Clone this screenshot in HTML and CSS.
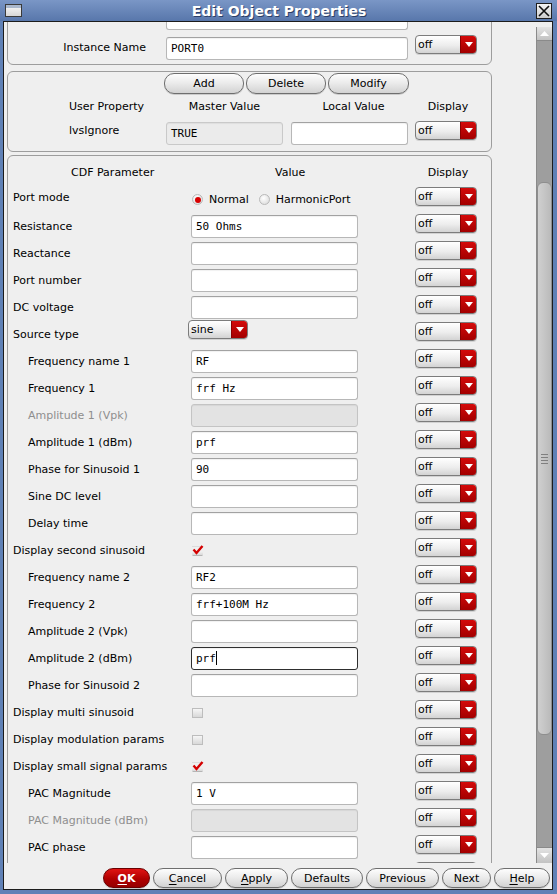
FILE: index.html
```html
<!DOCTYPE html>
<html>
<head>
<meta charset="utf-8">
<title>Edit Object Properties</title>
<link rel="stylesheet" href="styles.css">
</head>
<body>
<div class="window">
  <div class="titlebar">
    <span class="win-icon"></span>
    <span class="title">Edit Object Properties</span>
    <span class="close-btn"><svg width="12" height="12" viewBox="0 0 12 12"><path d="M1 1L11 11M11 1L1 11" stroke="#111" stroke-width="1.6" fill="none"/></svg></span>
  </div>
  <div class="frame">
    <div class="main">
      <div class="viewport">
        <div class="scroll-content">

          <section class="group g1">
            <div class="g1-row">
              <span class="g1-label"></span>
              <span class="field g1-field"></span>
            </div>
            <div class="g1-row">
              <span class="g1-label">Instance Name</span>
              <span class="field g1-field">PORT0</span>
              <span class="dd dd-g1"><span class="dd-text">off</span><span class="dd-btn"><svg width="8" height="5" viewBox="0 0 8 5"><path d="M0 0H8L4 5Z" fill="#fff"/></svg></span></span>
            </div>
          </section>

          <section class="group g2">
            <div class="g2-buttons">
              <span class="pill w80">Add</span>
              <span class="pill w80">Delete</span>
              <span class="pill w81">Modify</span>
            </div>
            <div class="g2-grid g2-head">
              <span class="h-user">User Property</span>
              <span class="h-center">Master Value</span>
              <span class="h-center h-local">Local Value</span>
              <span class="h-center h-disp">Display</span>
            </div>
            <div class="g2-grid g2-data">
              <span class="g2-label">lvsIgnore</span>
              <span class="field field-ro g2-box">TRUE</span>
              <span class="field g2-box"></span>
              <span class="dd dd-g2"><span class="dd-text">off</span><span class="dd-btn"><svg width="8" height="5" viewBox="0 0 8 5"><path d="M0 0H8L4 5Z" fill="#fff"/></svg></span></span>
            </div>
          </section>

          <section class="group g3">
            <div class="g3-head">
              <span class="h-cdf">CDF Parameter</span>
              <span class="h-value">Value</span>
              <span class="h-center h-disp">Display</span>
            </div>

            <div class="row">
              <span class="lbl lbl-up">Port mode</span>
              <span class="radios">
                <span class="radio on"></span><span class="radio-text">Normal</span>
                <span class="radio"></span><span class="radio-text">HarmonicPort</span>
              </span>
              <span class="dd"><span class="dd-text">off</span><span class="dd-btn"><svg width="8" height="5" viewBox="0 0 8 5"><path d="M0 0H8L4 5Z" fill="#fff"/></svg></span></span>
            </div>
            <div class="row">
              <span class="lbl">Resistance</span>
              <span class="field g3-field">50 Ohms</span>
              <span class="dd"><span class="dd-text">off</span><span class="dd-btn"><svg width="8" height="5" viewBox="0 0 8 5"><path d="M0 0H8L4 5Z" fill="#fff"/></svg></span></span>
            </div>
            <div class="row">
              <span class="lbl">Reactance</span>
              <span class="field g3-field"></span>
              <span class="dd"><span class="dd-text">off</span><span class="dd-btn"><svg width="8" height="5" viewBox="0 0 8 5"><path d="M0 0H8L4 5Z" fill="#fff"/></svg></span></span>
            </div>
            <div class="row">
              <span class="lbl">Port number</span>
              <span class="field g3-field"></span>
              <span class="dd"><span class="dd-text">off</span><span class="dd-btn"><svg width="8" height="5" viewBox="0 0 8 5"><path d="M0 0H8L4 5Z" fill="#fff"/></svg></span></span>
            </div>
            <div class="row">
              <span class="lbl">DC voltage</span>
              <span class="field g3-field"></span>
              <span class="dd"><span class="dd-text">off</span><span class="dd-btn"><svg width="8" height="5" viewBox="0 0 8 5"><path d="M0 0H8L4 5Z" fill="#fff"/></svg></span></span>
            </div>
            <div class="row">
              <span class="lbl">Source type</span>
              <span class="dd dd-sel"><span class="dd-text">sine</span><span class="dd-btn"><svg width="8" height="5" viewBox="0 0 8 5"><path d="M0 0H8L4 5Z" fill="#fff"/></svg></span></span>
              <span class="dd"><span class="dd-text">off</span><span class="dd-btn"><svg width="8" height="5" viewBox="0 0 8 5"><path d="M0 0H8L4 5Z" fill="#fff"/></svg></span></span>
            </div>
            <div class="row">
              <span class="lbl ind">Frequency name 1</span>
              <span class="field g3-field">RF</span>
              <span class="dd"><span class="dd-text">off</span><span class="dd-btn"><svg width="8" height="5" viewBox="0 0 8 5"><path d="M0 0H8L4 5Z" fill="#fff"/></svg></span></span>
            </div>
            <div class="row">
              <span class="lbl ind">Frequency 1</span>
              <span class="field g3-field">frf Hz</span>
              <span class="dd"><span class="dd-text">off</span><span class="dd-btn"><svg width="8" height="5" viewBox="0 0 8 5"><path d="M0 0H8L4 5Z" fill="#fff"/></svg></span></span>
            </div>
            <div class="row">
              <span class="lbl ind dis">Amplitude 1 (Vpk)</span>
              <span class="field g3-field field-dis"></span>
              <span class="dd"><span class="dd-text">off</span><span class="dd-btn"><svg width="8" height="5" viewBox="0 0 8 5"><path d="M0 0H8L4 5Z" fill="#fff"/></svg></span></span>
            </div>
            <div class="row">
              <span class="lbl ind">Amplitude 1 (dBm)</span>
              <span class="field g3-field">prf</span>
              <span class="dd"><span class="dd-text">off</span><span class="dd-btn"><svg width="8" height="5" viewBox="0 0 8 5"><path d="M0 0H8L4 5Z" fill="#fff"/></svg></span></span>
            </div>
            <div class="row">
              <span class="lbl ind">Phase for Sinusoid 1</span>
              <span class="field g3-field">90</span>
              <span class="dd"><span class="dd-text">off</span><span class="dd-btn"><svg width="8" height="5" viewBox="0 0 8 5"><path d="M0 0H8L4 5Z" fill="#fff"/></svg></span></span>
            </div>
            <div class="row">
              <span class="lbl ind">Sine DC level</span>
              <span class="field g3-field"></span>
              <span class="dd"><span class="dd-text">off</span><span class="dd-btn"><svg width="8" height="5" viewBox="0 0 8 5"><path d="M0 0H8L4 5Z" fill="#fff"/></svg></span></span>
            </div>
            <div class="row">
              <span class="lbl ind">Delay time</span>
              <span class="field g3-field"></span>
              <span class="dd"><span class="dd-text">off</span><span class="dd-btn"><svg width="8" height="5" viewBox="0 0 8 5"><path d="M0 0H8L4 5Z" fill="#fff"/></svg></span></span>
            </div>
            <div class="row">
              <span class="lbl">Display second sinusoid</span>
              <span class="cb-cell"><span class="cb checked"><svg width="12" height="10" viewBox="0 0 12 10"><path d="M1.5 4.5L4.5 8L10.5 1" stroke="#d40000" stroke-width="2.4" fill="none"/></svg></span></span>
              <span class="dd"><span class="dd-text">off</span><span class="dd-btn"><svg width="8" height="5" viewBox="0 0 8 5"><path d="M0 0H8L4 5Z" fill="#fff"/></svg></span></span>
            </div>
            <div class="row">
              <span class="lbl ind">Frequency name 2</span>
              <span class="field g3-field">RF2</span>
              <span class="dd"><span class="dd-text">off</span><span class="dd-btn"><svg width="8" height="5" viewBox="0 0 8 5"><path d="M0 0H8L4 5Z" fill="#fff"/></svg></span></span>
            </div>
            <div class="row">
              <span class="lbl ind">Frequency 2</span>
              <span class="field g3-field">frf+100M Hz</span>
              <span class="dd"><span class="dd-text">off</span><span class="dd-btn"><svg width="8" height="5" viewBox="0 0 8 5"><path d="M0 0H8L4 5Z" fill="#fff"/></svg></span></span>
            </div>
            <div class="row">
              <span class="lbl ind">Amplitude 2 (Vpk)</span>
              <span class="field g3-field"></span>
              <span class="dd"><span class="dd-text">off</span><span class="dd-btn"><svg width="8" height="5" viewBox="0 0 8 5"><path d="M0 0H8L4 5Z" fill="#fff"/></svg></span></span>
            </div>
            <div class="row">
              <span class="lbl ind">Amplitude 2 (dBm)</span>
              <span class="field g3-field field-focus">prf<span class="caret"></span></span>
              <span class="dd"><span class="dd-text">off</span><span class="dd-btn"><svg width="8" height="5" viewBox="0 0 8 5"><path d="M0 0H8L4 5Z" fill="#fff"/></svg></span></span>
            </div>
            <div class="row">
              <span class="lbl ind">Phase for Sinusoid 2</span>
              <span class="field g3-field"></span>
              <span class="dd"><span class="dd-text">off</span><span class="dd-btn"><svg width="8" height="5" viewBox="0 0 8 5"><path d="M0 0H8L4 5Z" fill="#fff"/></svg></span></span>
            </div>
            <div class="row">
              <span class="lbl">Display multi sinusoid</span>
              <span class="cb-cell"><span class="cb"></span></span>
              <span class="dd"><span class="dd-text">off</span><span class="dd-btn"><svg width="8" height="5" viewBox="0 0 8 5"><path d="M0 0H8L4 5Z" fill="#fff"/></svg></span></span>
            </div>
            <div class="row">
              <span class="lbl">Display modulation params</span>
              <span class="cb-cell"><span class="cb"></span></span>
              <span class="dd"><span class="dd-text">off</span><span class="dd-btn"><svg width="8" height="5" viewBox="0 0 8 5"><path d="M0 0H8L4 5Z" fill="#fff"/></svg></span></span>
            </div>
            <div class="row">
              <span class="lbl">Display small signal params</span>
              <span class="cb-cell"><span class="cb checked"><svg width="12" height="10" viewBox="0 0 12 10"><path d="M1.5 4.5L4.5 8L10.5 1" stroke="#d40000" stroke-width="2.4" fill="none"/></svg></span></span>
              <span class="dd"><span class="dd-text">off</span><span class="dd-btn"><svg width="8" height="5" viewBox="0 0 8 5"><path d="M0 0H8L4 5Z" fill="#fff"/></svg></span></span>
            </div>
            <div class="row">
              <span class="lbl ind">PAC Magnitude</span>
              <span class="field g3-field">1 V</span>
              <span class="dd"><span class="dd-text">off</span><span class="dd-btn"><svg width="8" height="5" viewBox="0 0 8 5"><path d="M0 0H8L4 5Z" fill="#fff"/></svg></span></span>
            </div>
            <div class="row">
              <span class="lbl ind dis">PAC Magnitude (dBm)</span>
              <span class="field g3-field field-dis"></span>
              <span class="dd"><span class="dd-text">off</span><span class="dd-btn"><svg width="8" height="5" viewBox="0 0 8 5"><path d="M0 0H8L4 5Z" fill="#fff"/></svg></span></span>
            </div>
            <div class="row">
              <span class="lbl ind">PAC phase</span>
              <span class="field g3-field"></span>
              <span class="dd"><span class="dd-text">off</span><span class="dd-btn"><svg width="8" height="5" viewBox="0 0 8 5"><path d="M0 0H8L4 5Z" fill="#fff"/></svg></span></span>
            </div>
            <div class="row">
              <span class="lbl"></span>
              <span class="cb-cell"></span>
              <span class="dd"><span class="dd-text"></span><span class="dd-btn"></span></span>
            </div>
          </section>

        </div>
      </div>
      <div class="scrollbar">
        <span class="sb-btn up"><svg width="9" height="5" viewBox="0 0 9 5"><path d="M0 5H9L4.5 0Z" fill="#fff"/></svg></span>
        <span class="sb-track-top"></span>
        <span class="sb-thumb"><span class="grip"></span></span>
        <span class="sb-track-bottom"></span>
        <span class="sb-btn down"><svg width="9" height="5" viewBox="0 0 9 5"><path d="M0 0H9L4.5 5Z" fill="#fff"/></svg></span>
      </div>
    </div>
    <div class="actions">
      <span class="pill ok b-ok"><span class="ul">O</span>K</span>
      <span class="pill b-cancel"><span class="ul">C</span>ancel</span>
      <span class="pill b-apply"><span class="ul">A</span>pply</span>
      <span class="pill b-defaults">Defaults</span>
      <span class="pill b-previous">Previous</span>
      <span class="pill b-next">Next</span>
      <span class="pill b-help"><span class="ul">H</span>elp</span>
    </div>
  </div>
</div>
</body>
</html>
```

FILE: styles.css
```css
* { box-sizing: border-box; }
html, body { margin: 0; padding: 0; }
body {
  width: 557px;
  height: 894px;
  overflow: hidden;
  font-family: "DejaVu Sans", "Liberation Sans", sans-serif;
  font-size: 11px;
  color: #000;
  background: #5f7fb4;
}
.window {
  width: 557px;
  height: 894px;
  display: flex;
  flex-direction: column;
  background: #6081b6;
}

/* title bar */
.titlebar {
  height: 21px;
  flex: none;
  display: flex;
  align-items: center;
  background: linear-gradient(#7a96c6, #5877ab);
}
.win-icon {
  width: 17px;
  height: 13px;
  margin-left: 5px;
  border: 1px solid #3a3a3a;
  background: linear-gradient(#aab8cd 0, #aab8cd 3px, #f0f0f0 3px, #d6d6d6);
}
.title {
  flex: 1;
  text-align: center;
  color: #fff;
  font-weight: bold;
  font-size: 14px;
  line-height: 21px;
  padding-top: 1px;
  text-shadow: 1px 1px 0 #2c3f66;
}
.close-btn {
  width: 16px;
  height: 16px;
  margin-right: 5px;
  border: 1px solid #1e1e1e;
  background: linear-gradient(#f4f4f4, #cdcdcd);
  display: flex;
  align-items: center;
  justify-content: center;
}

/* frame */
.frame {
  flex: 1;
  min-height: 0;
  margin: 0 4px 4px 3px;
  border: 1px solid #1c1c1c;
  background: #efefef;
  display: flex;
  flex-direction: column;
}
.main {
  height: 841px;
  flex: none;
  display: flex;
}
.viewport {
  flex: 1;
  overflow: hidden;
}
.scroll-content {
  margin-top: -24px;
  padding-left: 3px;
}

/* groups */
.group {
  width: 485px;
  border: 1px solid #9d9d9d;
  border-radius: 6px;
}
.g1 {
  padding: 8px 0 4px;
  display: flex;
  flex-direction: column;
  gap: 7px;
}
.g1-row {
  display: grid;
  grid-template-columns: 158px 249px 62px;
  height: 23px;
  align-items: start;
}
.g1-label {
  text-align: right;
  padding-right: 20px;
  line-height: 22px;
}
.g1-field { width: 242px; }
.dd.dd-g1 { margin-top: -2px; }

.g2 {
  margin-top: 6px;
  padding: 1px 0 5px;
}
.g2-buttons {
  display: flex;
  gap: 2px;
  padding-left: 156px;
}
.w80 { width: 80px; }
.w81 { width: 81px; }
.g2-grid {
  display: grid;
  grid-template-columns: 158px 125px 124px 62px;
}
.g2-head {
  height: 28px;
  line-height: 26px;
}
.h-user { padding-left: 61px; }
.h-center { text-align: center; }
.g2-head .h-center:nth-child(2) { width: 117px; }
.h-local { width: 117px; padding-left: 8px; }
.h-disp { padding-left: 4px; }
.g2-data {
  height: 24px;
  align-items: start;
}
.g2-label {
  padding-left: 61px;
  line-height: 17px;
}
.g2-box { width: 117px; height: 24px; line-height: 22px; }
.dd.dd-g2 { margin-top: -1px; }

.g3 {
  margin-top: 3px;
}
.g3-head {
  display: grid;
  grid-template-columns: 183px 224px 62px;
  height: 30px;
  padding-top: 4px;
  line-height: 26px;
}
.h-cdf { padding-left: 63px; }
.h-value { padding-left: 84px; }

.row {
  display: grid;
  grid-template-columns: 183px 224px 62px;
  height: 27px;
  align-items: start;
}
.lbl {
  padding-left: 5px;
  line-height: 28px;
  white-space: nowrap;
}
.lbl.ind { padding-left: 20px; }
.lbl.dis { color: #8e8e8e; }
.lbl.lbl-up { line-height: 23px; }

/* text fields */
.field {
  display: block;
  height: 23px;
  border: 1px solid #b7b7b7;
  border-top-color: #a2a2a2;
  border-radius: 3px;
  background: #fff;
  font-family: "DejaVu Sans Mono", "Liberation Mono", monospace;
  font-size: 11px;
  line-height: 22px;
  padding: 0 4px;
  white-space: pre;
  overflow: hidden;
  box-shadow: inset 0 1px 1px rgba(0, 0, 0, 0.06);
}
.g3-field {
  width: 167px;
  margin-top: 2px;
}
.field-ro {
  background: #ebebeb;
  border-color: #c9c9c9;
}
.field-dis {
  background: #e3e3e3;
  border-color: #c4c4c4;
}
.field-focus {
  border-color: #2e2e2e;
}
.caret {
  display: inline-block;
  width: 1px;
  height: 14px;
  background: #000;
  vertical-align: -3px;
}

/* dropdowns */
.dd {
  display: flex;
  width: 62px;
  height: 19px;
  margin-top: 1px;
  border: 1px solid #7c7c7c;
  border-radius: 4px;
  overflow: hidden;
  background: linear-gradient(#ffffff, #ededed 55%, #d3d3d3);
  box-shadow: 0 1px 0 rgba(0, 0, 0, 0.12);
}
.dd-text {
  flex: 1;
  padding-left: 2px;
  line-height: 18px;
}
.dd-btn {
  width: 16px;
  display: flex;
  align-items: center;
  justify-content: center;
  background: linear-gradient(#d40a0a, #a30000);
  border-left: 1px solid #8a0000;
}
.dd.dd-sel {
  width: 60px;
  margin-top: -1px;
  margin-left: -3px;
}

/* radios */
.radios {
  display: flex;
  align-items: center;
  height: 27px;
  padding-left: 1px;
}
.radio {
  width: 11px;
  height: 11px;
  border-radius: 50%;
  border: 1px solid #b9b9b9;
  background: radial-gradient(circle at 40% 35%, #ffffff, #d6d6d6);
  display: flex;
  align-items: center;
  justify-content: center;
}
.radio.on::after {
  content: "";
  width: 6px;
  height: 6px;
  border-radius: 50%;
  background: #d80000;
}
.radio-text {
  margin-left: 6px;
  margin-right: 10px;
}

/* checkboxes */
.cb-cell {
  display: flex;
  align-items: center;
  height: 27px;
  padding-left: 1px;
}
.cb {
  position: relative;
  width: 11px;
  height: 10px;
  border: 1px solid #bdbdbd;
  background: linear-gradient(#f6f6f6, #d8d8d8);
}
.cb.checked {
  border-color: transparent;
  border-bottom-color: #b5b5b5;
  background: linear-gradient(transparent 60%, #d9d9d9);
}
.cb svg {
  position: absolute;
  left: -1px;
  top: -2px;
}

/* pill buttons */
.pill {
  display: block;
  height: 21px;
  border: 1px solid #6e6e6e;
  border-radius: 10px;
  background: linear-gradient(#fdfdfd, #ececec 45%, #d2d2d2);
  box-shadow: 0 1px 0 rgba(0, 0, 0, 0.15);
  text-align: center;
  line-height: 19px;
  white-space: nowrap;
}
.ul {
  text-decoration: underline;
  text-underline-offset: 2px;
}

/* scrollbar */
.scrollbar {
  width: 16px;
  margin-top: 5px;
  border-left: 1px solid #8a8a8a;
  background: #9e9e9e;
  display: flex;
  flex-direction: column;
}
.sb-btn {
  display: flex;
  align-items: center;
  justify-content: center;
  background: linear-gradient(#e3e3e3, #c2c2c2);
}
.sb-btn.up {
  height: 14px;
  border-bottom: 1px solid #8a8a8a;
}
.sb-btn.down {
  height: 16px;
  border-top: 1px solid #8a8a8a;
}
.sb-track-top { height: 141px; flex: none; }
.sb-thumb {
  height: 553px;
  flex: none;
  border: 1px solid #8e8e8e;
  border-radius: 6px;
  background: linear-gradient(90deg, #d0d0d0, #bababa);
  display: flex;
  align-items: center;
  justify-content: center;
}
.grip {
  width: 7px;
  height: 10px;
  background: repeating-linear-gradient(#7f7f7f 0, #7f7f7f 1px, transparent 1px, transparent 3px);
}
.sb-track-bottom { flex: 1; }

/* bottom action bar */
.actions {
  flex: 1;
  display: flex;
  gap: 3px;
  padding: 5px 0 0 99px;
}
.actions .pill { height: 20px; line-height: 19px; }
.b-ok { width: 47px; }
.b-cancel { width: 69px; }
.b-apply { width: 63px; }
.b-defaults { width: 72px; }
.b-previous { width: 73px; }
.b-next { width: 49px; }
.b-help { width: 56px; }
.pill.ok {
  color: #fff;
  font-weight: bold;
  border-color: #6a0000;
  background: linear-gradient(#e01414, #b00000 55%, #960000);
}
```
